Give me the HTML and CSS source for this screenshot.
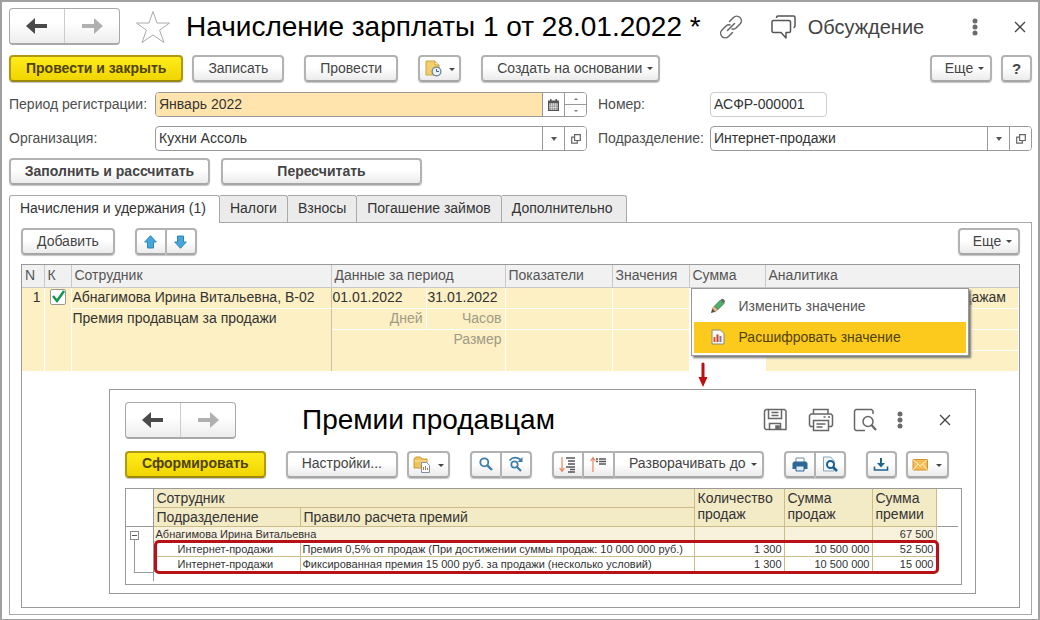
FILE: index.html
```html
<!DOCTYPE html>
<html lang="ru">
<head>
<meta charset="utf-8">
<meta name="viewport" content="width=device-width, initial-scale=1">
<title>Начисление зарплаты</title>
<link rel="stylesheet" href="styles.css">
</head>
<body>
<svg class="defs" aria-hidden="true">
  <symbol id="i-left" viewBox="0 0 22 16"><path d="M0 8 9 0v6h12v4H9v6z" fill="#4a4a4a"/></symbol>
  <symbol id="i-right" viewBox="0 0 22 16"><path d="M22 8 13 0v6H1v4h12v6z" fill="#b0b0b0"/></symbol>
  <symbol id="i-close" viewBox="0 0 12 12"><path d="M1 1l10 10M11 1 1 11" stroke="#444" stroke-width="1.3" fill="none"/></symbol>
  <symbol id="i-dots" viewBox="0 0 6 18"><g fill="#6b6b6b"><circle cx="3" cy="3" r="2.5"/><circle cx="3" cy="9" r="2.5"/><circle cx="3" cy="15" r="2.5"/></g></symbol>
  <symbol id="i-open" viewBox="0 0 10 10"><g fill="#fff" stroke="#666" stroke-width="1.2"><path d="M3.4 3.2H.7v6h5.6V7"/><path d="M3.6.7h5.7v5.8H3.6z"/></g></symbol>
</svg>
<main class="window">
  <header class="head">
    <div class="nav">
      <button type="button" aria-label="Назад"><svg width="22" height="16"><use href="#i-left"/></svg></button>
      <button type="button" aria-label="Вперед"><svg width="22" height="16"><use href="#i-right"/></svg></button>
    </div>
    <button type="button" class="plain star" aria-label="В избранное"><svg width="36" height="34" viewBox="0 0 36 34"><path d="M18 1.500 22 13h12.500L24.600 20.200 29 32.500 18 25 7 32.500 11.400 20.200 1.500 13H14z" fill="#fff" stroke="#aaa"/></svg></button>
    <h1 class="title">Начисление зарплаты 1 от 28.01.2022 *</h1>
    <button type="button" class="plain link" aria-label="Ссылка"><svg width="24" height="24" viewBox="0 0 24 24" fill="none" stroke="#666" stroke-width="1.500" stroke-linecap="round"><path d="M10.500 6.500 14.500 2.500a4.500 4.500 0 0 1 6.500 6.500l-4 4a4.500 4.500 0 0 1-4 1M13.500 17.500l-4 4A4.500 4.500 0 0 1 3 15l4-4a4.500 4.500 0 0 1 4-1M8.500 15.500l7-7"/></svg></button>
    <button type="button" class="plain chat"><svg width="25" height="24" viewBox="0 0 25 24" fill="none" stroke="#555" stroke-width="1.500" stroke-linejoin="round"><path d="M2.500 5.500h15.500a1.500 1.500 0 0 1 1.500 1.500v9a1.500 1.500 0 0 1-1.500 1.500H15v5.500l-5-5.500H2.500A1.500 1.500 0 0 1 1 16V7a1.500 1.500 0 0 1 1.500-1.500z"/><path d="M5.500 3V2.500A1.500 1.500 0 0 1 7 1h15.500A1.500 1.500 0 0 1 24 2.500V11a1.500 1.500 0 0 1-1.500 1.500"/></svg>Обсуждение</button>
    <button type="button" class="plain dots" aria-label="Меню"><svg width="6" height="18"><use href="#i-dots"/></svg></button>
    <button type="button" class="plain" aria-label="Закрыть"><svg width="12" height="12"><use href="#i-close"/></svg></button>
  </header>

  <div class="bar main-bar">
    <button type="button" class="btn primary">Провести и закрыть</button>
    <button type="button" class="btn">Записать</button>
    <button type="button" class="btn apart">Провести</button>
    <button type="button" class="btn drop icon apart" aria-label="Задачи"><svg width="17" height="17" viewBox="0 0 17 17"><path d="M1 1h9l4 4v10H1z" fill="#f3cf6b" stroke="#c9a544"/><path d="M10 1v4h4" fill="#fff0c0" stroke="#c9a544"/><circle cx="11.500" cy="11.500" r="4.400" fill="#e8f0f7" stroke="#6e8297" stroke-width="1.300"/><path d="M11.500 9v2.500H14" stroke="#4a6580" fill="none"/></svg></button>
    <button type="button" class="btn drop apart">Создать на основании</button>
    <button type="button" class="btn drop more">Еще</button>
    <button type="button" class="btn help">?</button>
  </div>

  <form class="form">
    <label for="period">Период регистрации:</label>
    <div class="field required">
      <input id="period" type="text" value="Январь 2022">
      <button type="button" aria-label="Календарь"><svg width="11" height="12" viewBox="0 0 11 12"><path d="M2 0h1.500v2H2zM7.500 0H9v2H7.500zM0 1.500h11V12H0z" fill="#555"/><path d="M1 4h9v7H1z" fill="#999"/><path d="M1 6h9M1 8.500h9M3.500 4v7M5.500 4v7M7.500 4v7" stroke="#ddd" stroke-width=".6"/></svg></button>
      <div class="spin"><button type="button" aria-label="Больше"><i class="up"></i></button><button type="button" aria-label="Меньше"><i class="down"></i></button></div>
    </div>
    <label for="number">Номер:</label>
    <div class="field short"><input id="number" type="text" value="АСФР-000001"></div>
    <label for="org">Организация:</label>
    <div class="field">
      <input id="org" type="text" value="Кухни Ассоль">
      <button type="button" aria-label="Выбрать"><i class="caret"></i></button>
      <button type="button" aria-label="Открыть"><svg width="10" height="10"><use href="#i-open"/></svg></button>
    </div>
    <label for="dept">Подразделение:</label>
    <div class="field">
      <input id="dept" type="text" value="Интернет-продажи">
      <button type="button" aria-label="Выбрать"><i class="caret"></i></button>
      <button type="button" aria-label="Открыть"><svg width="10" height="10"><use href="#i-open"/></svg></button>
    </div>
  </form>

  <div class="bar fill-bar">
    <button type="button" class="btn strong">Заполнить и рассчитать</button>
    <button type="button" class="btn strong">Пересчитать</button>
  </div>

  <div class="tabs" role="tablist">
    <button type="button" role="tab" aria-selected="true" class="tab current">Начисления и удержания (1)</button>
    <button type="button" role="tab" class="tab">Налоги</button>
    <button type="button" role="tab" class="tab">Взносы</button>
    <button type="button" role="tab" class="tab">Погашение займов</button>
    <button type="button" role="tab" class="tab">Дополнительно</button>
  </div>

  <section class="panel">
    <div class="bar">
      <button type="button" class="btn">Добавить</button>
      <div class="group apart">
        <button type="button" class="btn cell" aria-label="Вверх"><svg width="13" height="14" viewBox="0 0 13 14"><path d="M6.500.7 12.300 7H9.500v6h-6V7H.7z" fill="#45a5dc" stroke="#2f86bb"/></svg></button>
        <button type="button" class="btn cell" aria-label="Вниз"><svg width="13" height="14" viewBox="0 0 13 14"><path d="M6.500 13.300.7 7h2.800V1h6v6h2.800z" fill="#45a5dc" stroke="#2f86bb"/></svg></button>
      </div>
      <button type="button" class="btn drop more">Еще</button>
    </div>

    <div class="sheet">
      <table class="grid">
        <colgroup><col class="c-n"><col class="c-k"><col class="c-emp"><col class="c-d1"><col class="c-d2"><col class="c-ind"><col class="c-val"><col class="c-sum"><col></colgroup>
        <thead>
          <tr><th>N</th><th>К</th><th>Сотрудник</th><th colspan="2">Данные за период</th><th>Показатели</th><th>Значения</th><th>Сумма</th><th>Аналитика</th></tr>
        </thead>
        <tbody>
          <tr>
            <td rowspan="4" class="num">1</td>
            <td rowspan="4" class="check"><input type="checkbox" checked aria-label="К"></td>
            <td class="emp">Абнагимова Ирина Витальевна, В-02</td>
            <td>01.01.2022</td><td>31.01.2022</td><td></td><td></td>
            <td rowspan="4" class="active">
              <div class="menu" role="menu">
                <button type="button" role="menuitem"><svg width="16" height="16" viewBox="0 0 16 16"><path d="M1 15l1.200-4.500 3.300 3.300z" fill="#4a4a4a"/><path d="M2.200 10.500 4.500 8l3.500 3.500-2.500 2.300z" fill="#e5b184" stroke="#a9805a" stroke-width=".6"/><path d="M4.500 8l6-6L14 5.500l-6 6z" fill="#4caf6a" stroke="#3b7f50" stroke-width=".8"/><path d="M10.500 2 12 .8c1-.4 3 1.400 2.900 2.600L14 5.500z" fill="#666"/></svg>Изменить значение</button>
                <button type="button" role="menuitem" class="hot"><svg width="16" height="16" viewBox="0 0 16 16"><path d="M2 1h8.500L14 4.500V15H2z" fill="#f8f8f3" stroke="#8a8a7a"/><path d="M4.500 8v5" stroke="#d45a2a" stroke-width="2"/><path d="M7.500 5.500V13" stroke="#d43b2a" stroke-width="2"/><path d="M10.500 7v6" stroke="#7b7fa8" stroke-width="2"/></svg>Расшифровать значение</button>
              </div>
              <svg class="pointer" width="10" height="25" viewBox="0 0 10 25"><path d="M3.500 1.500Q5-.5 6.500 1.500V15H9.500L5 25 .5 15h3z" fill="#c00d12"/></svg>
            </td>
            <td class="tail">дажам</td>
          </tr>
          <tr><td rowspan="3" class="emp">Премия продавцам за продажи</td><td class="hint">Дней</td><td class="hint">Часов</td><td></td><td></td><td></td></tr>
          <tr><td rowspan="2" colspan="2" class="hint">Размер</td><td rowspan="2"></td><td rowspan="2"></td><td></td></tr>
          <tr><td></td></tr>
        </tbody>
      </table>

      <section class="report">
        <header class="head">
          <div class="nav">
            <button type="button" aria-label="Назад"><svg width="22" height="16"><use href="#i-left"/></svg></button>
            <button type="button" aria-label="Вперед"><svg width="22" height="16"><use href="#i-right"/></svg></button>
          </div>
          <h2 class="title">Премии продавцам</h2>
          <div class="tools">
            <button type="button" class="plain" aria-label="Сохранить"><svg width="24" height="24" viewBox="0 0 24 24" fill="none" stroke="#666" stroke-width="1.500"><path d="M3 1.500h18.500l1.500 1.500v18.500H3L1.500 20V3z"/><path d="M5.500 1.500v9h13v-9M8.500 4.500h7M8.500 7.500h7M6.500 21.500v-6h11v6"/><path d="M13 18h3v3h-3z" fill="#666"/></svg></button>
            <button type="button" class="plain" aria-label="Печать"><svg width="26" height="24" viewBox="0 0 26 24" fill="none" stroke="#666" stroke-width="1.500"><path d="M5.500 6V1.500h14.500V6M5 18.500H2.500L1.500 17V7.500L3 6h20l1.500 1.500V17l-1 1.500H21M5.500 12.500h15v10h-15z"/><path d="M8.500 16h9M8.500 19h6M15.500 9h2M20 9h2"/></svg></button>
            <button type="button" class="plain" aria-label="Просмотр"><svg width="24" height="24" viewBox="0 0 24 24" fill="none" stroke="#666" stroke-width="1.500"><path d="M20 6V3l-1.500-1.500H3L1.500 3v18L3 22.500h9"/><circle cx="15" cy="13.500" r="5"/><path d="M18.700 17.200 23 22" stroke-width="2.200"/></svg></button>
            <button type="button" class="plain" aria-label="Меню"><svg width="6" height="18"><use href="#i-dots"/></svg></button>
            <button type="button" class="plain" aria-label="Закрыть"><svg width="12" height="12"><use href="#i-close"/></svg></button>
          </div>
        </header>

        <div class="bar">
          <button type="button" class="btn primary">Сформировать</button>
          <button type="button" class="btn apart">Настройки...</button>
          <button type="button" class="btn drop icon" aria-label="Варианты"><svg width="18" height="17" viewBox="0 0 18 17"><path d="M1 3 2.500 1h5L9 3h5v9H1z" fill="#f0c45c" stroke="#c69a3c"/><path d="M1.500 5h12" stroke="#fae3a4"/><path d="M8.500 6.500h5l3 3v7h-8z" fill="#fff" stroke="#7f8fa5"/><path d="M10.500 14v-3M12.500 14v-4M14.500 14v-2" stroke="#d46a4a"/></svg></button>
          <div class="group apart">
            <button type="button" class="btn cell" aria-label="Найти"><svg width="14" height="14" viewBox="0 0 14 14" fill="none" stroke="#3f7dab"><circle cx="5.300" cy="5.300" r="4" stroke-width="1.800"/><path d="M8.300 8.300 13 13" stroke-width="2.400"/></svg></button>
            <button type="button" class="btn cell" aria-label="Найти далее"><svg width="16" height="16" viewBox="0 0 16 16" fill="none" stroke="#3f7dab"><circle cx="6.500" cy="8.500" r="3.200" stroke-width="1.700"/><path d="M9 11l4 4" stroke-width="2.200"/><path d="M1.500 4.500Q6-.5 12.500 3.500" stroke-width="1.700"/><path d="M14.500 1v5h-5z" fill="#3f7dab" stroke="none"/></svg></button>
          </div>
          <div class="group apart">
            <button type="button" class="btn cell" aria-label="Развернуть"><svg width="17" height="17" viewBox="0 0 17 17" fill="none"><path d="M3 1v13M.7 12 3 15.500 5.300 12" stroke="#e8825a" stroke-width="1.200"/><path d="M7 2h9M9 5h7M9 8h7M7 11h9M11 13.500h5M9 16h7" stroke="#555" stroke-width="1.300"/></svg></button>
            <button type="button" class="btn cell" aria-label="Свернуть"><svg width="17" height="17" viewBox="0 0 17 17" fill="none"><path d="M3 16V3M.7 5 3 1.500 5.300 5" stroke="#e8825a" stroke-width="1.200"/><path d="M6 3h2M9 3h7M6 5.500h2M9 5.500h7M9 8h7" stroke="#555" stroke-width="1.300"/></svg></button>
            <button type="button" class="btn drop">Разворачивать до</button>
          </div>
          <div class="group apart">
            <button type="button" class="btn cell" aria-label="Печать"><svg width="16" height="15" viewBox="0 0 16 15"><path d="M4 5V1h8v4" fill="#fff" stroke="#6e8ca8"/><path d="M2 4.500h12l1.500 1.500v6H.5V6z" fill="#2d6794"/><path d="M4 9h8v5H4z" fill="#dcebf6" stroke="#2d6794"/></svg></button>
            <button type="button" class="btn cell" aria-label="Просмотр"><svg width="16" height="16" viewBox="0 0 16 16"><path d="M1.500 1h7L12 4.500V15H1.500z" fill="#eef6fb" stroke="#86a5bd"/><circle cx="8.500" cy="8.500" r="3.500" fill="#fff" stroke="#1f5f90" stroke-width="2"/><path d="M11 11l4 4" stroke="#1f5f90" stroke-width="2.500"/></svg></button>
          </div>
          <button type="button" class="btn cell apart" aria-label="Сохранить"><svg width="16" height="15" viewBox="0 0 16 15" fill="none" stroke="#1f6390" stroke-width="2"><path d="M8 1v7"/><path d="M4 6h8L8 10.500z" fill="#1f6390" stroke="none"/><path d="M1.500 9.500V13h13V9.500" stroke-width="1.600"/></svg></button>
          <button type="button" class="btn drop icon" aria-label="Отправить"><svg width="17" height="17" viewBox="0 0 17 17"><path d="M1 3.500h14.500v10.500H1z" fill="#f3bd55" stroke="#d1912c"/><path d="M1 3.500 8.200 10l7.300-6.500M1 14l5-6M15.500 14l-5-6" fill="none" stroke="#fff0cc"/></svg></button>
        </div>

        <div class="result">
          <table class="totals">
            <colgroup><col class="t-tree"><col class="t-dep"><col class="t-rule"><col class="t-qty"><col class="t-sum"><col class="t-prem"><col class="t-end"></colgroup>
            <thead>
              <tr><td rowspan="2" class="tree"></td><th colspan="2">Сотрудник</th><th rowspan="2">Количество продаж</th><th rowspan="2">Сумма продаж</th><th rowspan="2">Сумма премии</th><td rowspan="2" class="end"></td></tr>
              <tr><th>Подразделение</th><th>Правило расчета премий</th></tr>
            </thead>
            <tbody>
              <tr class="sub"><td rowspan="4" class="tree"><div class="branch"><button type="button" aria-label="Свернуть"></button><span></span></div></td><td colspan="2" class="who">Абнагимова Ирина Витальевна</td><td></td><td></td><td class="r">67 500</td><td class="end"></td></tr>
              <tr><td class="in">Интернет-продажи</td><td>Премия 0,5% от продаж (При достижении суммы продаж: 10 000 000 руб.)</td><td class="r">1 300</td><td class="r">10 500 000</td><td class="r">52 500</td><td class="end"></td></tr>
              <tr><td class="in">Интернет-продажи</td><td>Фиксированная премия 15 000 руб. за продажи (несколько условий)</td><td class="r">1 300</td><td class="r">10 500 000</td><td class="r">15 000</td><td class="end"></td></tr>
              <tr class="rest"><td colspan="6"></td></tr>
            </tbody>
          </table>
          <div class="mark"></div>
        </div>
      </section>
    </div>
  </section>
</main>
</body>
</html>
```
FILE: styles.css
```css
* { box-sizing: border-box; }
body { margin: 0; background: #fff; color: #333; font: 14px/16px "Liberation Sans", Arial, sans-serif; }
button, input { font: inherit; color: inherit; margin: 0; }
button { padding: 0; }
svg { display: block; flex: none; }
.defs { position: absolute; width: 0; height: 0; }

.window { display: flex; flex-direction: column; min-height: 100vh; border: 2px solid #a0a0a0; padding: 6px 6px 4px 7px; }
.head { display: flex; align-items: center; }
.title { margin: 0; color: #000; font-size: 28px; line-height: 32px; font-weight: normal; white-space: nowrap; }
.plain { display: flex; align-items: center; border: 0; background: none; }
.nav { display: flex; width: 111px; height: 37px; flex: none; border: 1px solid #a8a8a8; border-bottom-width: 2px; border-radius: 4px; background: linear-gradient(#fff 40%, #ededed); }
.nav button { flex: 1; display: flex; align-items: center; justify-content: center; border: 0; background: none; }
.nav button + button { border-left: 1px solid #ccc; }
.star { margin: 0 15px; }
.link { margin-left: 18px; }
.chat { margin-left: 28px; gap: 12px; font-size: 20px; line-height: 24px; color: #444; }
.dots { margin-left: auto; margin-right: 36px; }
.window > .head { padding-right: 6px; }

.bar { display: flex; align-items: center; gap: 9px; }
.main-bar { margin-top: 10px; }
.btn { display: flex; align-items: center; justify-content: center; height: 27px; padding: 0 14px 2px; border: 2px solid #b2b2b2; border-bottom-color: #a6a6a6; border-radius: 4px; background: linear-gradient(#fff 45%, #ebebeb); box-shadow: 0 1px 1px #c4c4c4; color: #444; white-space: nowrap; }
.primary { padding: 0 15px 2px; border-color: #b09a12; border-bottom-color: #9c880c; background: linear-gradient(#ffec1c, #f0d500); color: #4d4200; font-weight: bold; }
.apart { margin-left: 11px; }
.drop::after { content: ""; margin: 2px 0 0 5px; border: 3px solid transparent; border-top-color: #444; border-bottom: 0; }
.drop { padding-right: 5px; }
.icon { width: 43px; padding: 0 4px; }
.icon::after { margin-left: 7px; }
.more { margin-left: auto; width: 62px; padding-left: 12px; }
.help { width: 31px; padding: 0; font-size: 15px; font-weight: bold; }
.strong { width: 201px; font-weight: bold; }
.fill-bar { margin-top: 7px; gap: 11px; }
.cell { width: 31px; padding: 0; }
.group { display: flex; }
.group .btn:not(:first-child) { border-top-left-radius: 0; border-bottom-left-radius: 0; border-left-width: 1px; }
.group .btn:not(:last-child) { border-top-right-radius: 0; border-bottom-right-radius: 0; border-right-width: 1px; }

.form { display: grid; grid-template-columns: 146px minmax(0, 432fr) 123px minmax(0, 322fr); row-gap: 9px; align-items: center; margin-top: 10px; }
.form label { padding-bottom: 2px; color: #4d4d4d; white-space: nowrap; }
.form label:nth-of-type(even) { padding-left: 11px; }
.field { display: flex; height: 25px; border: 1px solid #999; border-radius: 4px; overflow: hidden; background: #fff; }
.field input { flex: 1; min-width: 0; padding: 0 3px 2px; border: 0; background: none; color: #333; }
.field > button { width: 22px; display: flex; align-items: center; justify-content: center; border: 0; border-left: 1px solid #999; background: #fff; }
.field.required input { background: #ffe5ad; }
.short { width: 117px; border-color: #ccc; }
.spin { display: flex; flex-direction: column; width: 22px; border-left: 1px solid #999; }
.spin button { flex: 1; display: flex; align-items: center; justify-content: center; border: 0; background: #fff; }
.spin button + button { border-top: 1px solid #999; }
.caret { border: 3px solid transparent; border-top: 4px solid #555; border-bottom: 0; }
.up { border: 2px solid transparent; border-bottom-color: #777; border-top: 0; }
.down { border: 2px solid transparent; border-top-color: #777; border-bottom: 0; }

.tabs { display: flex; margin-top: 10px; }
.tab { height: 27px; padding: 0 10px 2px; border: 1px solid #a9a9a9; border-left-width: 0; border-bottom: 0; border-radius: 0 3px 0 0; background: #ebebeb; white-space: nowrap; }
.tab.current { position: relative; height: 28px; margin-bottom: -1px; padding: 0 13px 3px 10px; border-left-width: 1px; border-radius: 3px 3px 0 0; background: #fff; }
.tab:last-child { padding-right: 13px; }
.panel { flex: 1; display: flex; flex-direction: column; border: 1px solid #a9a9a9; padding: 5px 11px 6px; }
.sheet { flex: 1; margin-top: 9px; border: 1px solid #999; }

.grid { width: 100%; table-layout: fixed; border-collapse: collapse; border-bottom: 1px solid #ddd; }
.c-n { width: 22px; } .c-k { width: 27px; } .c-emp { width: 260px; } .c-d1 { width: 95px; } .c-d2 { width: 79px; }
.c-ind { width: 107px; } .c-val { width: 77px; } .c-sum { width: 76px; }
.grid th { height: 22px; padding: 0 3px 1px; border-right: 1px solid #c8c8c8; border-bottom: 1px solid #c8c8c8; background: #f1f1f1; color: #555; font-weight: normal; text-align: left; white-space: nowrap; }
.grid th:last-child { border-right: 0; }
.grid td { height: 21px; padding: 1px 1px 2px; border: 1px solid #fff; border-width: 0 1px 1px 0; background: #fdf0c4; vertical-align: top; white-space: nowrap; }
.grid .num { padding-right: 3px; text-align: right; }
.grid .check { padding: 1px 0 0 5px; }
.check input { appearance: none; display: block; width: 16px; height: 16px; border: 1px solid #999; border-radius: 2px; background: #fff; }
.check input:checked { background: #fff url("data:image/svg+xml,%3Csvg xmlns='http://www.w3.org/2000/svg' viewBox='0 0 14 14'%3E%3Cpath d='M2 6l4 5L13 1' fill='none' stroke='%2314964a' stroke-width='2.500'/%3E%3C/svg%3E"); }
.grid .emp { border-right-color: #c8c0a8; }
.grid .hint { padding-right: 3px; color: #a19a86; text-align: right; }
.grid .tail { padding-right: 12px; text-align: right; }
.grid .active { position: relative; background: #fff; }
.menu { position: absolute; z-index: 1; left: 1px; top: 0; width: 278px; padding: 2px; border: 1px solid #999; background: #fff; box-shadow: 2px 2px 2px #777; }
.menu button { display: flex; align-items: center; gap: 13px; width: 100%; height: 31px; padding: 0 16px 1px; border: 0; background: none; color: #555; }
.menu .hot { background: #fbca1d; color: #514206; }
.pointer { position: absolute; left: 8px; top: 74px; z-index: 1; }

.report { margin: 17px 43px 13px 87px; border: 1px solid #999; padding: 12px 13px 8px 15px; background: #fff; }
.report .title { margin-left: 66px; }
.tools { display: flex; align-items: center; margin-left: auto; padding-right: 11px; }
.tools button:nth-child(2) { margin-left: 21px; }
.tools button:nth-child(3) { margin-left: 19px; }
.tools button:nth-child(4) { margin-left: 20px; }
.tools button:nth-child(5) { margin-left: 36px; }
.report .bar { margin-top: 12px; }
.result { position: relative; margin-top: 10px; border: 1px solid #999; padding: 0 3px 3px 0; }
.totals { width: 100%; table-layout: fixed; border-collapse: collapse; font-size: 11px; line-height: 12px; }
.t-tree { width: 27px; } .t-dep { width: 147px; } .t-qty { width: 90px; } .t-sum { width: 88px; } .t-prem { width: 64px; } .t-end { width: 22px; }
.totals th { height: 19px; padding: 1px 3px; border: 1px solid #cbbd85; border-top: 0; background: #f3eac6; font-size: 14px; line-height: 16px; font-weight: normal; text-align: left; vertical-align: top; }
.totals thead { border-bottom: 1px solid #999; }
.totals td { height: 15px; padding: 0 2px; border: 1px solid #cbbd85; white-space: nowrap; }
.totals .sub td { border-top-color: #999; background: #f8f1dc; }
.totals .in { padding-left: 24px; }
.totals .r { text-align: right; }
.totals tr .tree { padding: 0; border: 0; border-right: 1px solid #999; background: #fff; vertical-align: top; }
.totals thead .tree, .totals thead .end { border-bottom: 1px solid #999; }
.totals tr .end, .totals .rest td { border-width: 0; background: #fff; }
.totals .rest td { height: 9px; }
.branch { display: flex; flex-direction: column; padding: 4px 0 0 4px; }
.branch button { width: 9px; height: 9px; border: 1px solid #888; background: linear-gradient(#555, #555) center / 5px 1px no-repeat; }
.branch span { height: 33px; margin-left: 4px; border: 1px solid #999; border-width: 0 0 1px 1px; }
.mark { position: absolute; left: 28px; right: 22px; top: 51px; height: 34px; border: 3px solid #b81218; border-radius: 5px; }
```
